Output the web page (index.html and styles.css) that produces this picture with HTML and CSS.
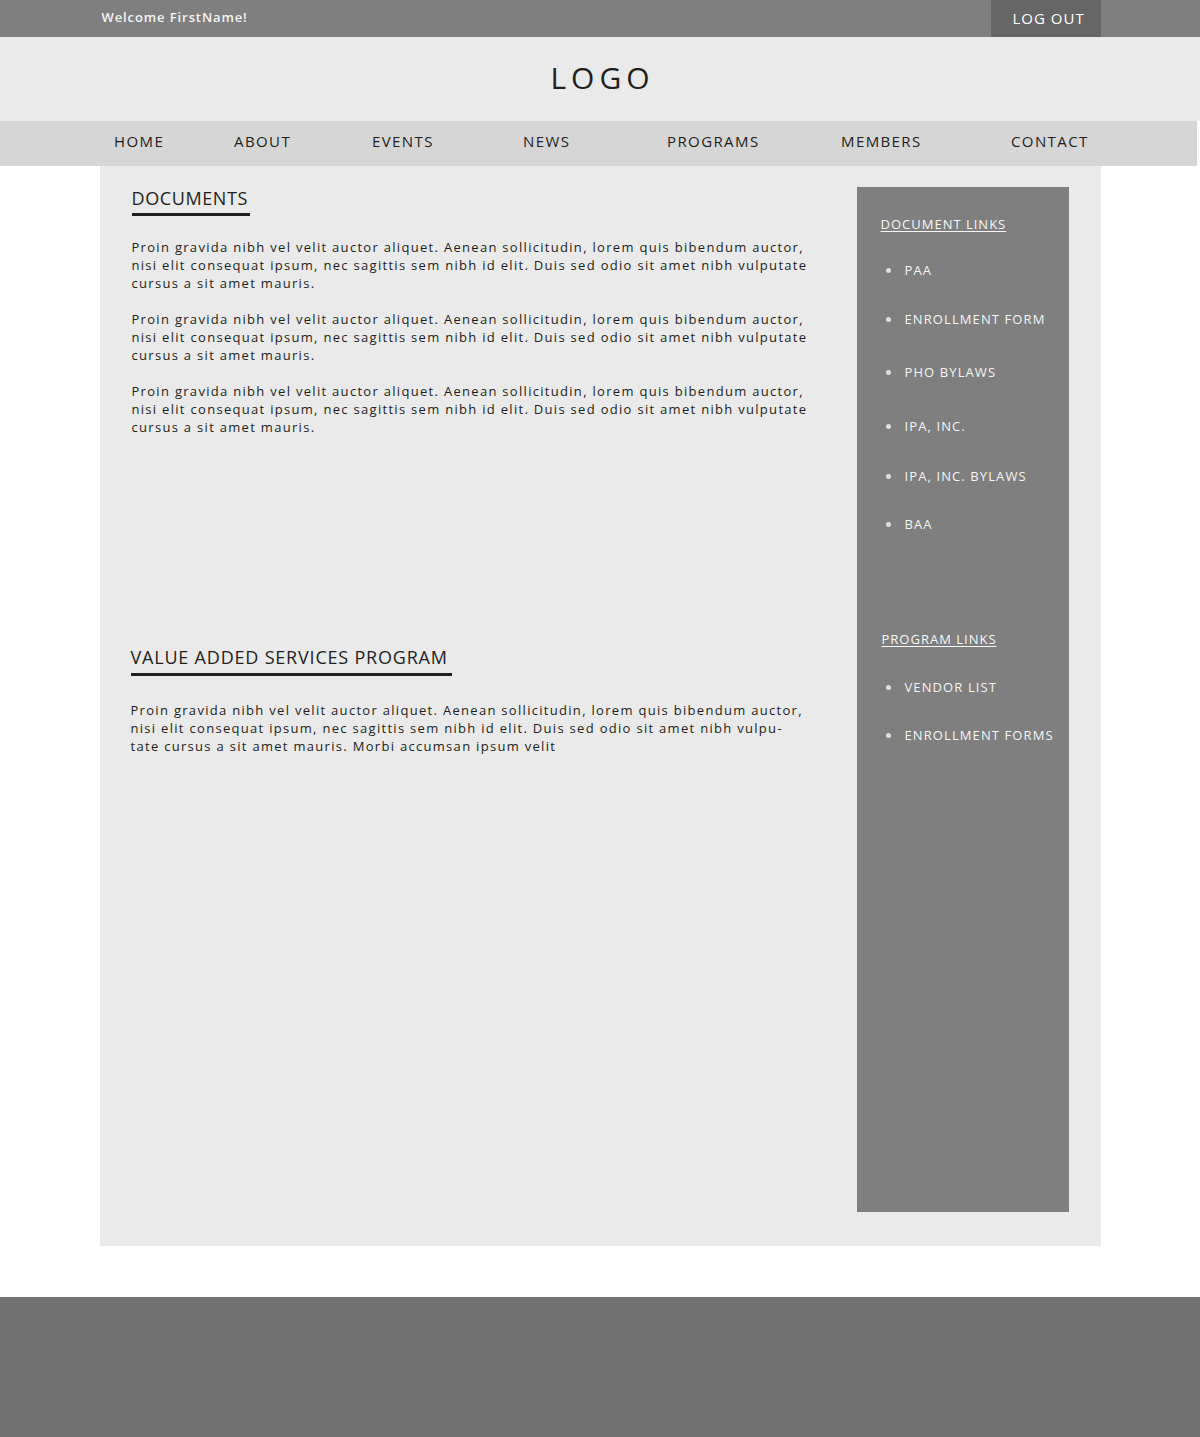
FILE: index.html
```html
<!DOCTYPE html>
<html lang="en">
<head>
<meta charset="utf-8">
<title>Documents</title>
<link rel="stylesheet" href="styles.css">
</head>
<body>
<div class="topbar">
  <div class="topbar-inner">
    <span class="welcome">Welcome FirstName!</span>
    <a class="logout" href="#">LOG OUT</a>
  </div>
</div>
<header class="header">
  <div class="logo">LOGO</div>
</header>
<nav class="nav">
  <ul class="nav-list">
    <li>HOME</li>
    <li>ABOUT</li>
    <li>EVENTS</li>
    <li>NEWS</li>
    <li>PROGRAMS</li>
    <li>MEMBERS</li>
    <li>CONTACT</li>
  </ul>
</nav>
<main class="main">
  <div class="content">
    <section class="docs">
      <h2 class="heading heading-docs">DOCUMENTS</h2>
      <p class="para">Proin gravida nibh vel velit auctor aliquet. Aenean sollicitudin, lorem quis bibendum auctor,<br>nisi elit consequat ipsum, nec sagittis sem nibh id elit. Duis sed odio sit amet nibh vulputate<br>cursus a sit amet mauris.</p>
      <p class="para">Proin gravida nibh vel velit auctor aliquet. Aenean sollicitudin, lorem quis bibendum auctor,<br>nisi elit consequat ipsum, nec sagittis sem nibh id elit. Duis sed odio sit amet nibh vulputate<br>cursus a sit amet mauris.</p>
      <p class="para">Proin gravida nibh vel velit auctor aliquet. Aenean sollicitudin, lorem quis bibendum auctor,<br>nisi elit consequat ipsum, nec sagittis sem nibh id elit. Duis sed odio sit amet nibh vulputate<br>cursus a sit amet mauris.</p>
    </section>
    <section class="vas">
      <h2 class="heading heading-vas">VALUE ADDED SERVICES PROGRAM</h2>
      <p class="para para-vas">Proin gravida nibh vel velit auctor aliquet. Aenean sollicitudin, lorem quis bibendum auctor,<br>nisi elit consequat ipsum, nec sagittis sem nibh id elit. Duis sed odio sit amet nibh vulpu-<br>tate cursus a sit amet mauris. Morbi accumsan ipsum velit</p>
    </section>
  </div>
  <aside class="sidebar">
    <h3 class="side-title">DOCUMENT LINKS</h3>
    <ul class="side-list doc-links">
      <li>PAA</li>
      <li>ENROLLMENT FORM</li>
      <li>PHO BYLAWS</li>
      <li>IPA, INC.</li>
      <li>IPA, INC. BYLAWS</li>
      <li>BAA</li>
    </ul>
    <h3 class="side-title side-title-prog">PROGRAM LINKS</h3>
    <ul class="side-list prog-links">
      <li>VENDOR LIST</li>
      <li>ENROLLMENT FORMS</li>
    </ul>
  </aside>
</main>
<footer class="footer"></footer>
</body>
</html>
```

FILE: styles.css
```css
* { box-sizing: border-box; }
html, body { margin: 0; padding: 0; }
body {
  font-family: "Open Sans", "Noto Sans", sans-serif;
  color: #231f20;
  background: #ffffff;
}
ul { list-style: none; margin: 0; padding: 0; }
h2, h3, p { margin: 0; font-weight: normal; }

.topbar { background: #7f7f7f; height: 37px; }
.topbar-inner {
  width: 1001px;
  margin: 0 auto;
  height: 37px;
  display: flex;
  justify-content: space-between;
  align-items: stretch;
}
.welcome {
  color: #f4f4f4;
  font-size: 13px;
  font-weight: 600;
  letter-spacing: 0.9px;
  padding: 8px 0 0 2px;
}
.logout {
  background: #666666;
  color: #ffffff;
  text-decoration: none;
  font-size: 15px;
  letter-spacing: 1px;
  width: 110px;
  padding: 8px 0 0 22px;
}

.header {
  background: #eaeaea;
  height: 84px;
  display: flex;
  justify-content: center;
}
.logo {
  font-size: 30px;
  letter-spacing: 5px;
  margin-right: -5px;
  line-height: 40px;
  padding-top: 21px;
  color: #231f20;
}

.nav { background: #d6d6d6; height: 45px; width: 1197px; }
.nav-list {
  display: flex;
  padding-left: 114px;
  padding-bottom: 5px;
  height: 45px;
  align-items: center;
  font-size: 15px;
  letter-spacing: 1.4px;
  color: #231f20;
}
.nav-list li:nth-child(1) { width: 120px; }
.nav-list li:nth-child(2) { width: 138px; }
.nav-list li:nth-child(3) { width: 151px; }
.nav-list li:nth-child(4) { width: 144px; }
.nav-list li:nth-child(5) { width: 174px; }
.nav-list li:nth-child(6) { width: 170px; }

.main {
  width: 1001px;
  margin: 0 auto;
  background: #eaeaea;
  display: flex;
  justify-content: space-between;
  align-items: flex-start;
  padding: 21px 32px 34px 32px;
}
.content { width: 700px; }
.heading {
  display: inline-block;
  font-size: 18px;
  line-height: 22px;
  padding-bottom: 4px;
  padding-right: 2px;
  border-bottom: 3px solid #231f20;
}
.heading-docs { letter-spacing: 0.6px; }
.para {
  font-size: 13px;
  line-height: 18px;
  letter-spacing: 1.3px;
  color: #231f20;
  margin-bottom: 18px;
}
.docs .heading { margin-bottom: 22px; }
.vas { margin-top: 210px; }
.heading-vas {
  letter-spacing: 0.8px;
  padding-bottom: 5px;
  margin-left: -1px;
  padding-right: 4px;
  margin-bottom: 25px;
}
.para-vas { margin-left: -1px; }

.sidebar {
  width: 212px;
  height: 1025px;
  background: #7f7f7f;
  padding: 28px 0 0 24px;
  color: #ffffff;
}
.side-title {
  font-size: 13px;
  line-height: 18px;
  letter-spacing: 1px;
  text-decoration: underline;
  text-underline-offset: 2px;
  color: #f6f6f6;
}
.side-list li {
  position: relative;
  font-size: 13px;
  line-height: 18px;
  letter-spacing: 1.1px;
  font-weight: 500;
  color: #f4f4f4;
  padding-left: 24px;
}
.side-list li::before {
  content: "";
  position: absolute;
  left: 5px;
  top: 7px;
  width: 5px;
  height: 5px;
  border-radius: 50%;
  background: #e0e0e0;
}
.doc-links li:nth-child(1) { margin-top: 28px; }
.doc-links li:nth-child(2) { margin-top: 31px; }
.doc-links li:nth-child(3) { margin-top: 35px; }
.doc-links li:nth-child(4) { margin-top: 36px; }
.doc-links li:nth-child(5) { margin-top: 32px; }
.doc-links li:nth-child(6) { margin-top: 30px; }
.side-title-prog { margin-top: 97px; padding-left: 1px; }
.prog-links li { margin-top: 30px; }

.footer {
  background: #727272;
  height: 140px;
  margin-top: 51px;
}
```
